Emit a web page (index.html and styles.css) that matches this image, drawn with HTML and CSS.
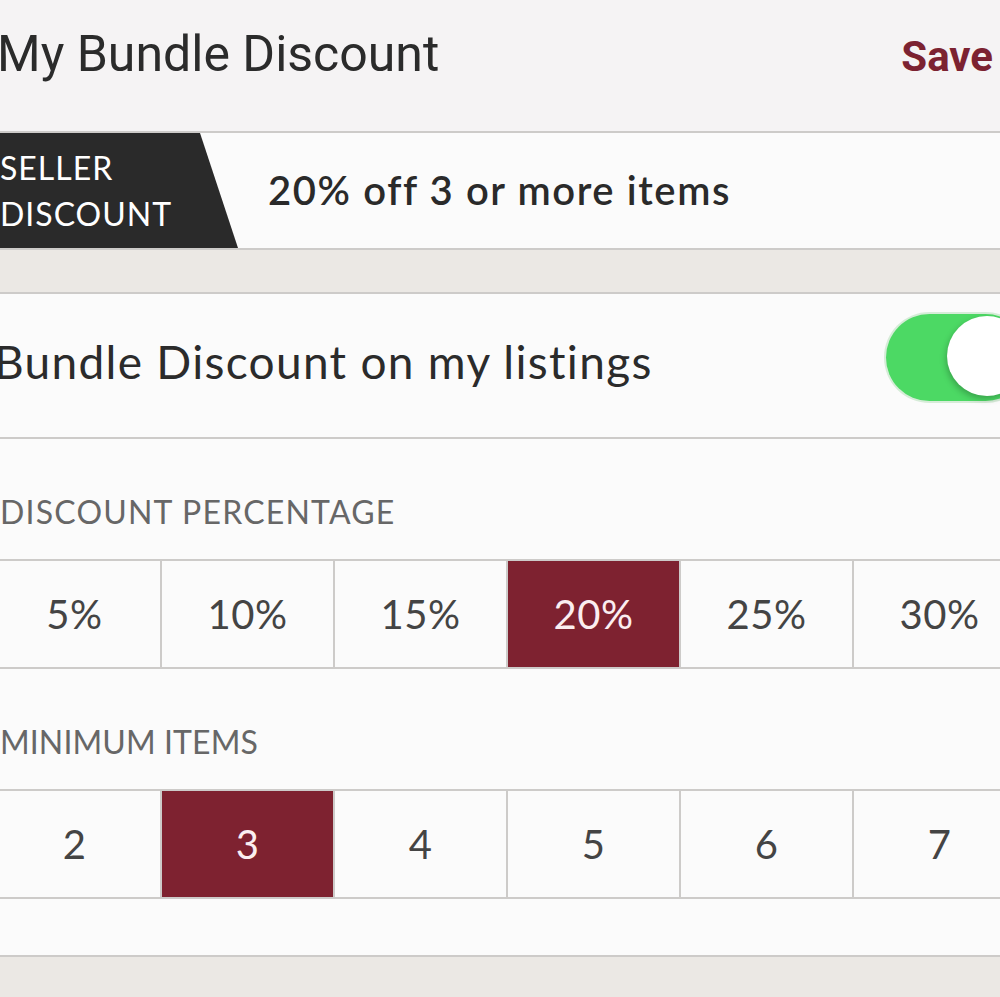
FILE: index.html
```html
<!DOCTYPE html>
<html>
<head>
<meta charset="utf-8">
<link rel="stylesheet" href="styles.css">
</head>
<body>
<div class="screen">
  <header class="topbar">
    <h1 class="title">My Bundle Discount</h1>
    <span class="save">Save</span>
  </header>
  <section class="banner">
    <div class="tag">SELLER<br>DISCOUNT</div>
    <div class="banner-text">20% off 3 or more items</div>
  </section>
  <div class="spacer"></div>
  <main class="card">
    <div class="toggle-row">
      <span class="toggle-label">Bundle Discount on my listings</span>
      <span class="switch"><span class="knob"></span></span>
    </div>
    <div class="group">
      <div class="group-label">DISCOUNT PERCENTAGE</div>
      <div class="segments">
        <div class="seg">5%</div>
        <div class="seg">10%</div>
        <div class="seg">15%</div>
        <div class="seg active">20%</div>
        <div class="seg">25%</div>
        <div class="seg">30%</div>
      </div>
    </div>
    <div class="group">
      <div class="group-label narrow">MINIMUM ITEMS</div>
      <div class="segments">
        <div class="seg">2</div>
        <div class="seg active">3</div>
        <div class="seg">4</div>
        <div class="seg">5</div>
        <div class="seg">6</div>
        <div class="seg">7</div>
      </div>
    </div>
  </main>
</div>
</body>
</html>
```

FILE: styles.css
```css
* { box-sizing: border-box; }
html, body { margin: 0; padding: 0; }
body {
  background: #ebe8e4;
  width: 1000px;
  height: 997px;
  overflow: hidden;
  font-family: Lato, "Open Sans", sans-serif;
}
.screen { width: 1000px; }

.topbar {
  height: 133px;
  background: #f5f3f4;
  border-bottom: 2px solid #cdcbc9;
  display: flex;
  justify-content: space-between;
  align-items: baseline;
  padding: 30px 7px 0 0;
}
.title {
  margin: 0 0 0 -3px;
  font-family: Roboto, sans-serif;
  font-weight: 400;
  font-size: 50px;
  line-height: 49px;
  color: #2b2b2b;
}
.save {
  font-family: Roboto, sans-serif;
  font-weight: 700;
  font-size: 42px;
  line-height: 49px;
  color: #7c2231;
}

.banner {
  height: 117px;
  background: #fbfbfb;
  border-bottom: 2px solid #cdcbc9;
  display: flex;
  align-items: center;
}
.tag {
  align-self: stretch;
  width: 238px;
  background: #2a2a2a;
  color: #fff;
  clip-path: polygon(0 0, 200px 0, 238px 100%, 0 100%);
  font-size: 32px;
  line-height: 46px;
  padding: 12px 0 0 0;
  letter-spacing: 1px;
}
.banner-text {
  margin-left: 30px;
  font-size: 40px;
  font-weight: 600;
  letter-spacing: 1.6px;
  color: #2a2a2a;
  padding-bottom: 2px;
}

.spacer { height: 42px; }

.card {
  background: #fbfbfb;
  border-top: 2px solid #cdcbc9;
  border-bottom: 2px solid #cdcbc9;
  height: 665px;
}
.toggle-row {
  height: 145px;
  border-bottom: 2px solid #cdcbc9;
  display: flex;
  align-items: center;
  justify-content: space-between;
  padding-bottom: 8px;
}
.toggle-label {
  margin-left: -6px;
  font-size: 46px;
  letter-spacing: 1.3px;
  color: #2b2b2b;
}
.switch {
  position: relative;
  width: 143px;
  height: 87px;
  margin-right: -29px;
  margin-top: -8px;
  border-radius: 44px;
  background: #4cd964;
  box-shadow: 0 0 0 2px #d6ecd8;
}
.knob {
  position: absolute;
  right: 2px;
  top: 2px;
  width: 80px;
  height: 80px;
  border-radius: 50%;
  background: #fff;
  box-shadow: -1px 3px 6px rgba(0,0,0,0.25);
}

.group { padding-top: 53px; }
.group-label {
  font-size: 32px;
  line-height: 40px;
  letter-spacing: 1.2px;
  color: #676767;
  margin-left: 0;
  padding-bottom: 27px;
}
.group-label.narrow { letter-spacing: 0.1px; }
.segments {
  display: grid;
  grid-template-columns: repeat(6, 173px);
  margin-left: -13px;
  width: 1038px;
  border-top: 2px solid #cdcbc9;
  border-bottom: 2px solid #cdcbc9;
  height: 110px;
}
.seg {
  border-left: 2px solid #cdcbc9;
  display: flex;
  align-items: center;
  justify-content: center;
  font-size: 40px;
  letter-spacing: 0.5px;
  color: #444;
  padding-bottom: 0;
}
.seg.active {
  background: #7e2230;
  color: #fbeef0;
}
```
